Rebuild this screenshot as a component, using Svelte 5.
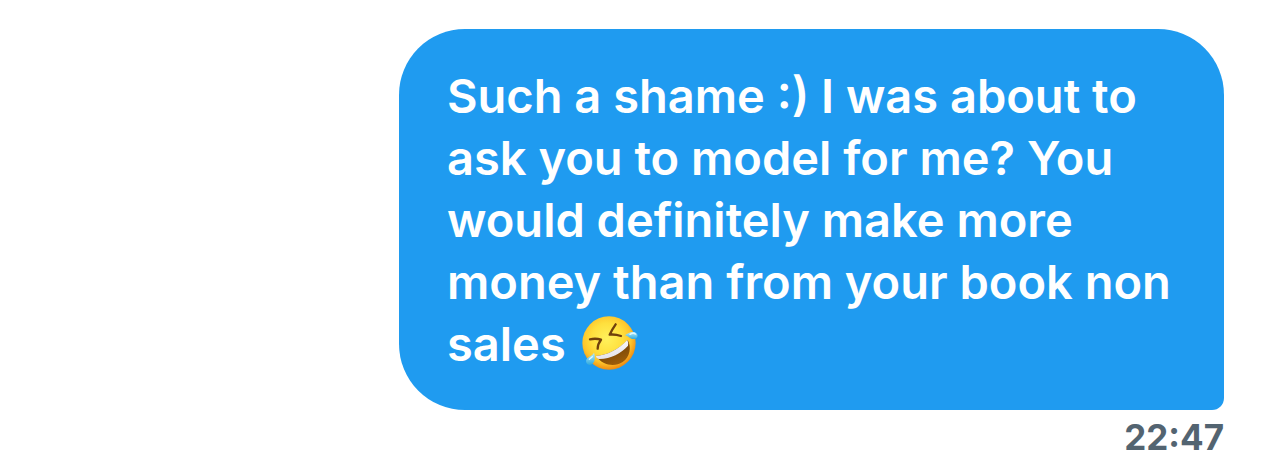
<script>
  const message = 'Such a shame :) I was about to ask you to model for me? You would definitely make more money than from your book non sales';
</script>

<main>
  <article>
    <p>{message}
      <svg viewBox="36 30 168 168" role="img" aria-label="Rolling on the floor laughing">
        <defs>
          <radialGradient id="face" cx=".46" cy=".42" r=".58">
            <stop offset="0" stop-color="#fff15c" />
            <stop offset=".5" stop-color="#ffe03e" />
            <stop offset=".78" stop-color="#fec52c" />
            <stop offset="1" stop-color="#ee8c12" />
          </radialGradient>
          <linearGradient id="mouth" x1="0" y1="0" x2=".5" y2="1">
            <stop offset="0" stop-color="#5c3206" />
            <stop offset="1" stop-color="#9a5c0a" />
          </linearGradient>
          <linearGradient id="teeth" x1="0" y1="0" x2=".3" y2="1">
            <stop offset="0" stop-color="#fff" />
            <stop offset="1" stop-color="#e4e2ea" />
          </linearGradient>
          <linearGradient id="tear" x1="0" y1="0" x2="0" y2="1">
            <stop offset="0" stop-color="#b5edff" />
            <stop offset="1" stop-color="#2fa9dc" />
          </linearGradient>
        </defs>
        <circle cx="117" cy="114" r="80" fill="url(#face)" />
        <path d="M77 153C109 152 147 132 173 105C185 126 180 157 158 171C132 188 98 180 77 153Z" fill="url(#mouth)" />
        <path d="M77 153C109 152 147 132 172 105Q176 113 174 122C153 145 121 163 86 162Q79 160 77 153Z" fill="url(#teeth)" />
        <g fill="none" stroke="#70400c" stroke-width="7" stroke-linecap="round" stroke-linejoin="round">
          <path d="M60 103Q77 99 93 104Q83 117 83 131" />
          <path d="M137 58Q127 72 119 89Q135 87 153 93" />
        </g>
        <path d="M165 91C177 80 195 77 201 87C207 99 194 105 184 101C177 99 173 92 165 91Z" fill="url(#tear)" />
        <path d="M72 143C77 157 75 174 63 179C52 183 45 171 50 162C55 154 68 153 72 143Z" fill="url(#tear)" />
        <path d="M180 88Q190 82 196 87M67 155L58 163" fill="none" stroke="#e2faff" stroke-width="4" stroke-linecap="round" />
      </svg>
    </p>
  </article>
  <time datetime="22:47">22:47</time>
</main>

<style>
  :global(body) { margin: 0; background: #fff; }
  main { display: flex; flex-direction: column; align-items: flex-end; padding: 29px 60px 0; font-family: Inter, "Liberation Sans", sans-serif; }
  article { box-sizing: border-box; width: 100%; max-width: 825px; padding: 36px 48px 35px; border-radius: 66px 66px 12px 66px; background: #1f9bf0; }
  p { margin: 0; color: #fff; font-size: 47px; font-weight: 600; line-height: 62px; }
  svg { width: 56px; height: 56px; margin-left: 4px; vertical-align: -10px; }
  time { margin-top: 7px; color: #536471; font-size: 35px; font-weight: 700; line-height: 40px; }
</style>
